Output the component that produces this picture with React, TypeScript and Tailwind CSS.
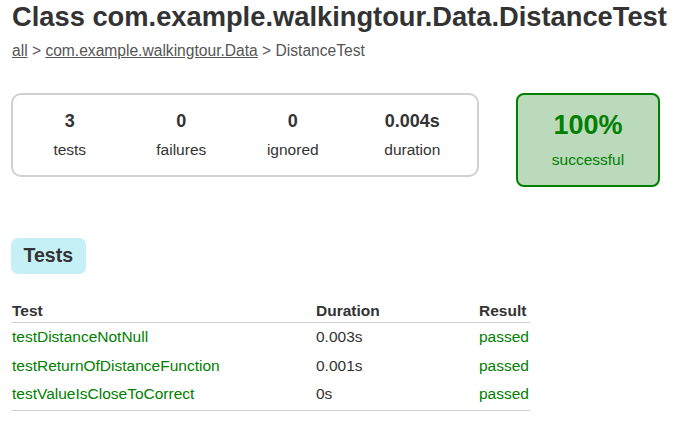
const font = { fontFamily: '"Liberation Sans", Arial, sans-serif' };

const counters = [
  { value: "3", label: "tests", w: "w-[112px]" },
  { value: "0", label: "failures", w: "w-[112px]" },
  { value: "0", label: "ignored", w: "w-[112px]" },
  { value: "0.004s", label: "duration", w: "w-[128px]" },
];

const tests = [
  { name: "testDistanceNotNull", duration: "0.003s" },
  { name: "testReturnOfDistanceFunction", duration: "0.001s" },
  { name: "testValueIsCloseToCorrect", duration: "0s" },
];

export default function App() {
  return (
    <div className="w-[674px] h-[422px] bg-white text-[#333] overflow-hidden" style={font}>
      <div className="flex flex-col pl-[11px]">
        <h1 className="pt-[1px] pl-[1px] text-[27.3px] leading-[32px] font-bold text-[#333]">
          Class com.example.walkingtour.Data.DistanceTest
        </h1>
        <div className="mt-[9px] pl-[1px] text-[15.6px] leading-[18px] text-[#555]">
          <a className="underline">all</a> &gt; <a className="underline">com.example.walkingtour.Data</a> &gt; DistanceTest
        </div>

        <div className="mt-[33px] flex items-start gap-[37px]">
          <div className="flex w-[468px] h-[84px] rounded-[10px] border-2 border-[#d0d0d0] px-[1px]">
            {counters.map((c) => (
              <div key={c.label} className={`${c.w} flex flex-col items-center pt-[16px]`}>
                <div className="text-[18px] leading-[20px] font-bold">{c.value}</div>
                <div className="mt-[10px] text-[15.5px] leading-[18px]">{c.label}</div>
              </div>
            ))}
          </div>
          <div className="flex flex-col items-center w-[144px] h-[94px] rounded-[8px] border-2 border-[#008000] bg-[#bbd9bb] text-[#008000] pt-[14px]">
            <div className="text-[27px] leading-[32px] font-bold">100%</div>
            <div className="mt-[10px] text-[15.5px] leading-[18px]">successful</div>
          </div>
        </div>

        <div className="mt-[51px] flex">
          <div className="h-[36px] flex items-center px-[12.5px] rounded-[7px] bg-[#c5f0f5] text-[19.5px] font-bold text-[#333]">
            Tests
          </div>
        </div>

        <div className="mt-[25px] w-[519px] pl-[1px] text-[15.5px] leading-[18px]">
          <div className="grid grid-cols-[304px_163px_51px] pt-[3px] pb-[2px] border-b border-[#d0d0d0] font-bold">
            <div>Test</div>
            <div>Duration</div>
            <div>Result</div>
          </div>
          <div className="pb-[1.5px] border-b border-[#d0d0d0]">
            {tests.map((t) => (
              <div key={t.name} className="grid grid-cols-[304px_163px_51px] h-[28.5px] items-center">
                <div className="text-[#008000]">{t.name}</div>
                <div>{t.duration}</div>
                <div className="text-[#008000]">passed</div>
              </div>
            ))}
          </div>
        </div>
      </div>
    </div>
  );
}
